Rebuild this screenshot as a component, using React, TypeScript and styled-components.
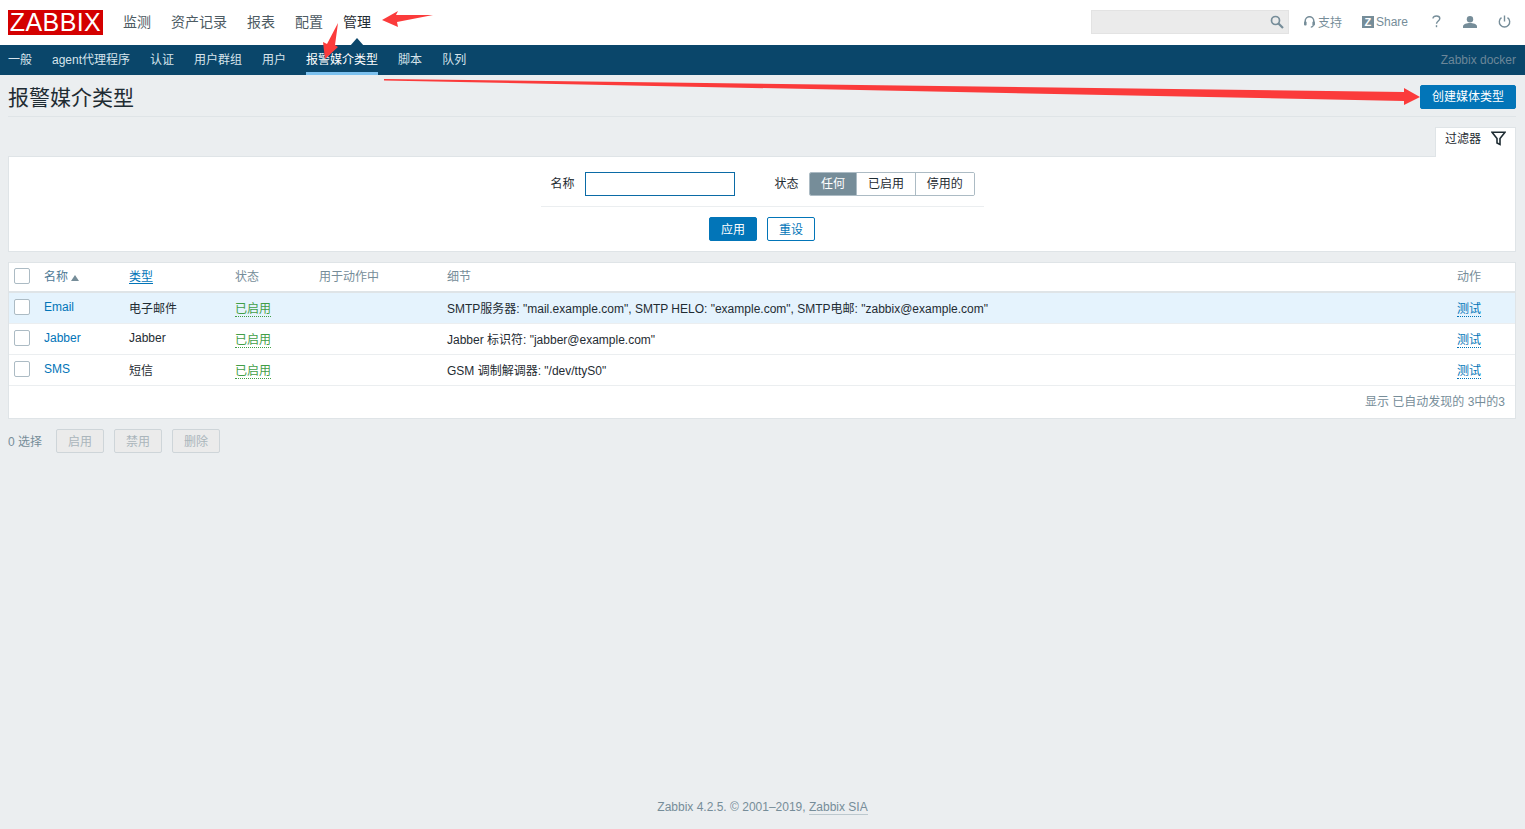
import React from "react";
import styled, { createGlobalStyle } from "styled-components";

const Global = createGlobalStyle`
  html, body { margin: 0; padding: 0; background: #ebeef0; }
  body { font-family: "Liberation Sans", "Noto Sans CJK SC", sans-serif; font-size: 12px; color: #1f2c33; }
  * { box-sizing: border-box; }
`;

const Page = styled.div`
  position: relative;
  min-height: 829px;
  display: flex;
  flex-direction: column;
`;

const TopBar = styled.header`
  height: 45px;
  background: #fff;
  display: flex;
  align-items: center;
  padding: 0 8px;
`;

const Logo = styled.div`
  width: 95px;
  height: 25px;
  background: #d40000;
  color: #fff;
  font-size: 25px;
  line-height: 25px;
  text-align: center;
  letter-spacing: 0.4px;
`;

const MainNav = styled.nav`
  display: flex;
  gap: 20px;
  margin-left: 20px;
  flex: 1;
`;

const MainItem = styled.a<{ $active?: boolean }>`
  position: relative;
  font-size: 14px;
  line-height: 20px;
  padding-bottom: 2px;
  color: ${(p) => (p.$active ? "#1f2c33" : "#4d5b63")};
  ${(p) =>
    p.$active &&
    `&::after {
      content: "";
      position: absolute;
      left: 50%;
      bottom: -12px;
      margin-left: -7px;
      border-left: 7px solid transparent;
      border-right: 7px solid transparent;
      border-bottom: 8px solid #0a466a;
    }`}
`;

const Tools = styled.div`
  display: flex;
  align-items: center;
  margin-right: 3px;
  padding-bottom: 2px;
`;

const Search = styled.div`
  width: 198px;
  height: 24px;
  background: #ebebeb;
  border: 1px solid #e3e3e3;
  display: flex;
  align-items: center;
  justify-content: flex-end;
  padding-right: 4px;
`;

const ToolLink = styled.a<{ $ml: number; $w?: number; $gap?: number }>`
  display: flex;
  align-items: center;
  justify-content: center;
  gap: ${(p) => p.$gap ?? 2}px;
  margin-left: ${(p) => p.$ml}px;
  width: ${(p) => (p.$w ? `${p.$w}px` : "auto")};
  color: #768d99;
  font-size: 12px;
`;

const ZBadge = styled.span`
  width: 12px;
  height: 12px;
  background: #768d99;
  color: #fff;
  font-size: 11px;
  font-weight: 700;
  line-height: 12px;
  text-align: center;
`;

const SubBar = styled.nav`
  height: 30px;
  background: #0a466a;
  display: flex;
  align-items: stretch;
  padding: 0 9px 0 8px;
  gap: 20px;
`;

const SubItem = styled.a<{ $active?: boolean }>`
  color: ${(p) => (p.$active ? "#fff" : "#d6e4ec")};
  line-height: 30px;
  height: 30px;
  border-bottom: 3px solid ${(p) => (p.$active ? "#7cc1ef" : "transparent")};
`;

const ServerName = styled.span`
  margin-left: auto;
  color: #6c8799;
  line-height: 30px;
`;

const Content = styled.main`
  flex: 1;
  padding: 0 9px 0 8px;
  display: flex;
  flex-direction: column;
`;

const TitleRow = styled.div`
  height: 42px;
  display: flex;
  align-items: center;
  justify-content: space-between;
  border-bottom: 1px solid #dfe4e7;
  padding-top: 2px;
`;

const Title = styled.h1`
  margin: -2px 0 0;
  font-size: 21px;
  font-weight: 400;
  color: #1f2c33;
`;

const Primary = styled.button<{ $w: number }>`
  width: ${(p) => p.$w}px;
  height: 24px;
  padding: 0 0 2px;
  background: #0275b8;
  color: #fff;
  border: 1px solid #0275b8;
  border-radius: 2px;
  font: inherit;
`;

const Outline = styled(Primary)`
  background: #fff;
  color: #0275b8;
`;

const TabRow = styled.div`
  display: flex;
  justify-content: flex-end;
  margin-top: 10px;
  position: relative;
  z-index: 1;
  margin-bottom: -1px;
`;

const FilterTab = styled.div`
  width: 81px;
  height: 30px;
  background: #fff;
  border: 1px solid #dfe4e7;
  border-bottom: 0;
  display: flex;
  align-items: flex-start;
  line-height: 15px;
  padding: 4px 9px 0;
  justify-content: space-between;
`;

const FilterIcon = styled.svg`
  margin-top: -1px;
`;

const FilterPanel = styled.section`
  height: 96px;
  background: #fff;
  border: 1px solid #dfe4e7;
  display: flex;
  flex-direction: column;
  align-items: center;
  padding-top: 15px;
`;

const FilterForm = styled.div`
  width: 443px;
  height: 35px;
  border-bottom: 1px solid #ebeef0;
  display: flex;
  align-items: flex-start;
  padding-left: 10px;
`;

const FieldLabel = styled.label<{ $ml?: number }>`
  line-height: 24px;
  margin-left: ${(p) => p.$ml ?? 0}px;
  margin-right: 10px;
`;

const TextInput = styled.div`
  width: 150px;
  height: 24px;
  border: 1px solid #0b6ba6;
  background: #fff;
`;

const Segments = styled.div`
  display: flex;
  width: 166px;
  height: 24px;
  border: 1px solid #acbbc4;
  border-radius: 2px;
  overflow: hidden;
`;

const Segment = styled.span<{ $on?: boolean; $w: number }>`
  width: ${(p) => p.$w}px;
  text-align: center;
  line-height: 22px;
  background: ${(p) => (p.$on ? "#768d99" : "#fff")};
  color: ${(p) => (p.$on ? "#fff" : "#1f2c33")};
  & + & { border-left: 1px solid #acbbc4; }
`;

const FilterActions = styled.div`
  display: flex;
  gap: 10px;
  margin-top: 10px;
`;

const TableCard = styled.section`
  margin-top: 10px;
  background: #fff;
  border: 1px solid #dfe4e7;
`;

const Table = styled.table`
  width: 100%;
  table-layout: fixed;
  border-collapse: collapse;
`;

const Head = styled.th`
  height: 29px;
  padding: 0 5px 4px;
  font-weight: 400;
  text-align: left;
  color: #768d99;
  border-bottom: 2px solid #dfe4e7;
`;

const Row = styled.tr<{ $hover?: boolean }>`
  background: ${(p) => (p.$hover ? "#e5f3fd" : "#fff")};
`;

const Cell = styled.td`
  height: 31px;
  padding: 0 5px 1px;
  border-bottom: 1px solid #ebeef0;
  color: #1f2c33;
`;

const CheckCell = styled.td`
  height: 31px;
  padding: 0 0 1px 5px;
  border-bottom: 1px solid #ebeef0;
`;

const CheckHead = styled.th`
  height: 29px;
  padding: 0 0 2px 5px;
  border-bottom: 2px solid #dfe4e7;
`;

const Check = styled.span`
  display: block;
  width: 16px;
  height: 16px;
  background: #fff;
  border: 1px solid #acbbc4;
  border-radius: 2px;
`;

const SortLink = styled.a`
  color: #0275b8;
  text-decoration: underline;
  text-underline-offset: 2px;
`;

const HeadLink = styled.span`
  color: #4e7a96;
`;

const SortArrow = styled.span`
  display: inline-block;
  margin-left: 3px;
  border-left: 4px solid transparent;
  border-right: 4px solid transparent;
  border-bottom: 6px solid #768d99;
`;

const NameLink = styled.a`
  color: #0275b8;
`;

const Enabled = styled.span`
  color: #429e47;
  border-bottom: 1px dotted #429e47;
`;

const Test = styled.span`
  color: #0275b8;
  border-bottom: 1px dotted #0275b8;
`;

const TableFoot = styled.div`
  height: 32px;
  display: flex;
  align-items: center;
  justify-content: flex-end;
  padding: 0 10px 2px 0;
  color: #768d99;
`;

const ActionBar = styled.div`
  display: flex;
  align-items: center;
  gap: 10px;
  margin-top: 10px;
`;

const Selected = styled.span`
  color: #768d99;
  margin-right: 4px;
`;

const Disabled = styled.button`
  width: 48px;
  height: 24px;
  padding: 0;
  background: #ebebeb;
  border: 1px solid #ced5d9;
  border-radius: 2px;
  color: #aab5bb;
  font: inherit;
`;

const Footer = styled.footer`
  height: 44px;
  text-align: center;
  color: #768d99;
  padding-top: 15px;
`;

const FooterLink = styled.a`
  border-bottom: 1px solid #bcc8ce;
`;

const Arrows = styled.svg`
  position: absolute;
  left: 0;
  top: 0;
  pointer-events: none;
`;

const rows = [
  { name: "Email", type: "电子邮件", hover: true, detail: 'SMTP服务器: "mail.example.com", SMTP HELO: "example.com", SMTP电邮: "zabbix@example.com"' },
  { name: "Jabber", type: "Jabber", detail: 'Jabber 标识符: "jabber@example.com"' },
  { name: "SMS", type: "短信", detail: 'GSM 调制解调器: "/dev/ttyS0"' },
];

const subs = ["一般", "agent代理程序", "认证", "用户群组", "用户", "报警媒介类型", "脚本", "队列"];

export default function App() {
  return (
    <Page>
      <Global />
      <TopBar>
        <Logo>ZABBIX</Logo>
        <MainNav>
          <MainItem>监测</MainItem>
          <MainItem>资产记录</MainItem>
          <MainItem>报表</MainItem>
          <MainItem>配置</MainItem>
          <MainItem $active>管理</MainItem>
        </MainNav>
        <Tools>
          <Search>
            <svg width="14" height="14" viewBox="0 0 14 14" fill="none" stroke="#768d99" strokeWidth="1.7">
              <circle cx="5.5" cy="5.5" r="4" />
              <path d="M8.5 8.5L13 13" strokeWidth="2.2" />
            </svg>
          </Search>
          <ToolLink $ml={15} $gap={3}>
            <svg width="11" height="12" viewBox="0 0 11 12" fill="none" stroke="#768d99" strokeWidth="1.5">
              <path d="M1.2 7V5a4.3 4.3 0 0 1 8.6 0V7" />
              <path d="M9.4 8.5c0 1.5-1 2.6-2.6 2.6" strokeWidth="1.1" />
              <rect x="0" y="5.4" width="2.6" height="4" rx="1" fill="#768d99" stroke="none" />
              <rect x="8.4" y="5.4" width="2.6" height="4" rx="1" fill="#768d99" stroke="none" />
            </svg>
            支持
          </ToolLink>
          <ToolLink $ml={20}>
            <ZBadge>Z</ZBadge>Share
          </ToolLink>
          <ToolLink $ml={18} $w={20}>
            <svg width="9" height="13" viewBox="0 0 9 13" fill="none" stroke="#768d99" strokeWidth="1.4">
              <path d="M1 3.5C1 1.8 2.6 1 4.4 1 6.3 1 7.8 2 7.8 3.6c0 2.4-3.3 2.5-3.3 5.2" />
              <path d="M4.5 10.2v2" />
            </svg>
          </ToolLink>
          <ToolLink $ml={14} $w={20}>
            <svg width="14" height="12" viewBox="0 0 14 12" fill="#768d99">
              <ellipse cx="7" cy="3.2" rx="3.2" ry="3.2" />
              <path d="M0 12V10.3C0 8.2 4 7 7 7s7 1.2 7 3.3V12z" />
            </svg>
          </ToolLink>
          <ToolLink $ml={14} $w={20}>
            <svg width="13" height="13" viewBox="0 0 13 13" fill="none" stroke="#768d99" strokeWidth="1.4">
              <path d="M6.5 0.5v6" />
              <path d="M3.5 2.6a5.2 5.2 0 1 0 6 0" />
            </svg>
          </ToolLink>
        </Tools>
      </TopBar>
      <SubBar>
        {subs.map((s) => (
          <SubItem key={s} $active={s === "报警媒介类型"}>
            {s}
          </SubItem>
        ))}
        <ServerName>Zabbix docker</ServerName>
      </SubBar>
      <Content>
        <TitleRow>
          <Title>报警媒介类型</Title>
          <Primary $w={96}>创建媒体类型</Primary>
        </TitleRow>
        <TabRow>
          <FilterTab>
            过滤器
            <FilterIcon width="15" height="15" viewBox="0 0 15 15" fill="none" stroke="#1f2c33" strokeWidth="1.6">
              <path d="M1 1.2h13L9 7.5v6l-3-1.6V7.5z" />
            </FilterIcon>
          </FilterTab>
        </TabRow>
        <FilterPanel>
          <FilterForm>
            <FieldLabel>名称</FieldLabel>
            <TextInput />
            <FieldLabel $ml={40}>状态</FieldLabel>
            <Segments>
              <Segment $on $w={47}>任何</Segment>
              <Segment $w={59}>已启用</Segment>
              <Segment $w={59}>停用的</Segment>
            </Segments>
          </FilterForm>
          <FilterActions>
            <Primary $w={48}>应用</Primary>
            <Outline $w={48}>重设</Outline>
          </FilterActions>
        </FilterPanel>
        <TableCard>
          <Table>
            <colgroup>
              <col width={30} />
              <col width={85} />
              <col width={106} />
              <col width={84} />
              <col width={128} />
              <col />
              <col width={63} />
            </colgroup>
            <thead>
              <tr>
                <CheckHead><Check /></CheckHead>
                <Head><HeadLink>名称</HeadLink><SortArrow /></Head>
                <Head><SortLink>类型</SortLink></Head>
                <Head>状态</Head>
                <Head>用于动作中</Head>
                <Head>细节</Head>
                <Head>动作</Head>
              </tr>
            </thead>
            <tbody>
              {rows.map((r) => (
                <Row key={r.name} $hover={r.hover}>
                  <CheckCell><Check /></CheckCell>
                  <Cell><NameLink>{r.name}</NameLink></Cell>
                  <Cell>{r.type}</Cell>
                  <Cell><Enabled>已启用</Enabled></Cell>
                  <Cell />
                  <Cell>{r.detail}</Cell>
                  <Cell><Test>测试</Test></Cell>
                </Row>
              ))}
            </tbody>
          </Table>
          <TableFoot>显示 已自动发现的 3中的3</TableFoot>
        </TableCard>
        <ActionBar>
          <Selected>0 选择</Selected>
          <Disabled>启用</Disabled>
          <Disabled>禁用</Disabled>
          <Disabled>删除</Disabled>
        </ActionBar>
      </Content>
      <Footer>
        Zabbix 4.2.5. © 2001–2019, <FooterLink>Zabbix SIA</FooterLink>
      </Footer>
      <Arrows width="1525" height="829" viewBox="0 0 1525 829">
        <polygon points="382,20 398,11 396,15 433,15 397,22 398,27" fill="#fb3b3b" />
        <polygon points="338,23 335,45 338,47 325,59 323,42 327,44" fill="#fb3b3b" />
        <polygon points="384,79 1404,92 1404,88 1420,97 1404,105 1404,101 384,80.5" fill="#fb3b3b" />
      </Arrows>
    </Page>
  );
}
